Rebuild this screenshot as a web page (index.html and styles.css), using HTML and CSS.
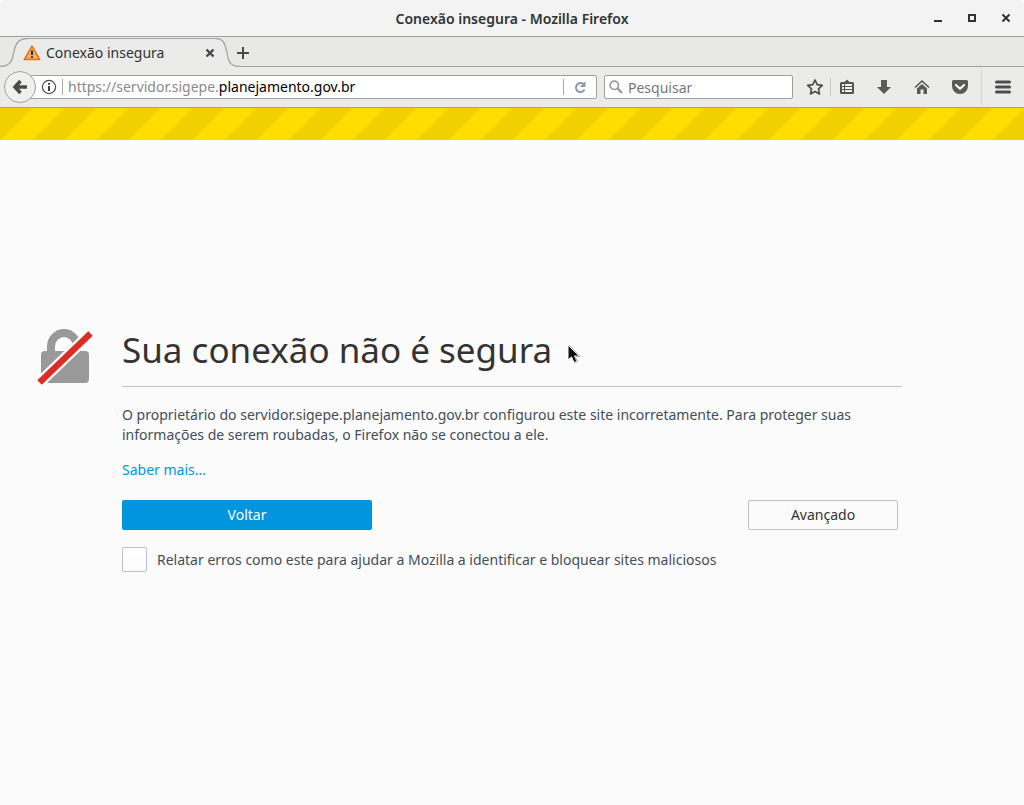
FILE: index.html
```html
<!DOCTYPE html>
<html lang="pt-BR">
<head>
<meta charset="utf-8">
<meta name="viewport" content="width=device-width, initial-scale=1">
<title>Conexão insegura</title>
<link rel="stylesheet" href="styles.css">
</head>
<body>
<div class="window">
  <header class="titlebar">
    <span class="window-title">Conexão insegura - Mozilla Firefox</span>
    <div class="window-controls">
      <button class="window-button" aria-label="Minimizar"><svg width="10" height="10"><path d="M1 8h8" stroke="#2e3436" stroke-width="2"/></svg></button>
      <button class="window-button" aria-label="Maximizar"><svg width="10" height="10"><path d="M2 2h6v6h-6z" fill="none" stroke="#2e3436" stroke-width="2"/></svg></button>
      <button class="window-button" aria-label="Fechar"><svg width="10" height="10"><path d="M1.500 1.500l7 7M8.500 1.500l-7 7" stroke="#2e3436" stroke-width="2"/></svg></button>
    </div>
  </header>
  <nav class="tabs">
    <div class="tab">
      <svg class="tab-edge" width="28" height="29" viewBox="0 0 28 29"><path d="M0 28.500C9 28.500 12 24 13.500 16C15 6 18 .5 28 .5V29H0z" fill="#ebebea"/><path d="M0 28.500C9 28.500 12 24 13.500 16C15 6 18 .5 28 .5" fill="none" stroke="#a3a8ad" stroke-width="1.400"/></svg>
      <div class="tab-body">
        <svg class="tab-icon" width="18" height="16" viewBox="0 0 18 16"><path d="M9 1.200 1.200 14.600h15.600z" fill="#f58c3c" stroke="#e0731c" stroke-width="1.500" stroke-linejoin="round"/><path d="M9 3 3 13.500h12z" fill="#fbb067"/><path d="M9 5.500v4.500M9 11.300v1.700" stroke="#333" stroke-width="2"/></svg>
        <span class="tab-label">Conexão insegura</span>
        <button class="tab-close" aria-label="Fechar aba"><svg width="10" height="10"><path d="M1.500 1.500l7 7M8.500 1.500l-7 7" stroke="#45494b" stroke-width="2.400"/></svg></button>
      </div>
      <svg class="tab-edge" width="24" height="29" viewBox="0 0 24 29"><path d="M0 .5C7 .5 9 5 11 15C12.500 24 14 28.500 24 28.500V29H0z" fill="#ebebea"/><path d="M0 .5C7 .5 9 5 11 15C12.500 24 14 28.500 24 28.500" fill="none" stroke="#a3a8ad" stroke-width="1.400"/></svg>
    </div>
    <button class="new-tab" aria-label="Nova aba"><svg width="12" height="12"><path d="M6 0v12M0 6h12" stroke="#4a4a4a" stroke-width="2"/></svg></button>
  </nav>
  <div class="toolbar">
    <button class="back" aria-label="Voltar uma página"><svg width="16" height="16" viewBox="0 0 16 16"><path d="M8.500 2 3 8l5.500 6M3.500 8H15" fill="none" stroke="#4b4b4b" stroke-width="3.600" stroke-linejoin="miter"/></svg></button>
    <div class="address">
      <button class="info" aria-label="Informações do site"><svg width="16" height="16" viewBox="0 0 16 16"><circle cx="8" cy="8" r="6.600" fill="none" stroke="#4b4b4b" stroke-width="1.200"/><path d="M8 7v5M8 4v1.800" stroke="#3b3b3b" stroke-width="2"/></svg></button>
      <div class="url" role="textbox" aria-label="Endereço" tabindex="0">https://servidor.sigepe.<span class="url-domain">planejamento.gov.br</span></div>
      <button class="reload" aria-label="Recarregar"><svg width="14" height="14" viewBox="0 0 14 14"><path d="M10.500 4.200A4.500 4.500 0 1 0 11.500 9.500" fill="none" stroke="#8c9aab" stroke-width="2"/><path d="M12.500 1v6H6.800z" fill="#8c9aab"/></svg></button>
    </div>
    <label class="search">
      <svg width="14" height="14" viewBox="0 0 14 14"><circle cx="5.300" cy="5.300" r="4.200" fill="none" stroke="#999" stroke-width="1.700"/><path d="M8.500 8.500l4.500 4.500" stroke="#999" stroke-width="2.400"/></svg>
      <input class="search-input" type="text" placeholder="Pesquisar" aria-label="Pesquisar">
    </label>
    <div class="actions">
      <button class="action star" aria-label="Favoritar"><svg width="18" height="18" viewBox="0 0 18 18"><path d="M9 2l2.200 4.700 5.100.6-3.800 3.500 1 5.100L9 13.400l-4.500 2.500 1-5.100L1.700 7.300l5.100-.6z" fill="none" stroke="#4d4d4d" stroke-width="1.700" stroke-linejoin="round"/></svg></button>
      <button class="action list" aria-label="Lista de favoritos"><svg width="16" height="16" viewBox="0 0 16 16"><path d="M2.500 3h3L8 .5 10.500 3h3Q15 3 15 4.500v9q0 1.500-1.500 1.500h-11Q1 15 1 13.500v-9Q1 3 2.500 3z" fill="#555"/><path d="M3 6h2M6 6h7M3 9h2M6 9h7M3 12h2M6 12h7" stroke="#f3f3f3" stroke-width="2"/></svg></button>
      <button class="action" aria-label="Downloads"><svg width="16" height="16" viewBox="0 0 16 16"><path d="M5 1h6v7h4L8 15 1 8h4z" fill="#5a5a5a"/></svg></button>
      <button class="action" aria-label="Página inicial"><svg width="16" height="16" viewBox="0 0 16 16"><path d="M1 8.500 8 2l7 6.500" fill="none" stroke="#555" stroke-width="1.600"/><path d="M3 9.500 8 5l5 4.500V15H9.500v-4.500h-3V15H3z" fill="#5a5a5a"/></svg></button>
      <button class="action" aria-label="Pocket"><svg width="16" height="16" viewBox="0 0 16 16"><path d="M1.500 1h13Q16 1 16 2.500V7q0 3.500-2.300 5.700Q11.300 15 8 15T2.300 12.700Q0 10.500 0 7V2.500Q0 1 1.500 1z" fill="#5a5a5a"/><path d="M4 6l4 3.800L12 6" fill="none" stroke="#fff" stroke-width="2.200" stroke-linecap="round" stroke-linejoin="round"/></svg></button>
    </div>
    <button class="menu" aria-label="Abrir menu"><svg width="16" height="14" viewBox="0 0 16 14"><path d="M1.500 2h13M1.500 7h13M1.500 12h13" stroke="#4d4d4d" stroke-width="3" stroke-linecap="round"/></svg></button>
  </div>
  <main class="page">
    <svg class="lock" width="58" height="58" viewBox="0 0 58 58"><path d="M15 25V17.500a13 13.500 0 0 1 26 0V25" fill="none" stroke="#999" stroke-width="8"/><rect x="5" y="22" width="48" height="32" rx="4" fill="#999"/><path d="M2.500 54.500 55 4" stroke="#fbfbfb" stroke-width="11"/><path d="M3.500 53.500 54.500 4.500" stroke="#dc2d22" stroke-width="6.500"/></svg>
    <div class="content">
      <h1 class="title">Sua conexão não é segura</h1>
      <p class="text">O proprietário do servidor.sigepe.planejamento.gov.br configurou este site incorretamente. Para proteger suas informações de serem roubadas, o Firefox não se conectou a ele.</p>
      <p class="text"><a class="link" href="#">Saber mais…</a></p>
      <div class="buttons">
        <button class="button primary">Voltar</button>
        <button class="button secondary">Avançado</button>
      </div>
      <label class="report"><input class="checkbox" type="checkbox"><span>Relatar erros como este para ajudar a Mozilla a identificar e bloquear sites maliciosos</span></label>
    </div>
    <svg class="cursor" width="14" height="20" viewBox="0 0 14 20"><path d="M1 1v15l3.500-3 2.500 5.500 3-1.300-2.500-5.200H12z" fill="#111" stroke="#fff"/><path d="M8 12.500l2.500 5-3.500 1.500M9 12.500h4L2 1" fill="none" stroke="#aaa"/></svg>
  </main>
</div>
</body>
</html>
```
FILE: styles.css
```css
* {
  box-sizing: border-box;
}

body {
  margin: 0;
  background: #fff;
  font-family: "Noto Sans", "Open Sans", sans-serif;
  font-size: 14px;
  color: #2e3436;
}

button {
  padding: 0;
  border: 0;
  background: none;
  font: inherit;
  color: inherit;
}

svg {
  display: block;
  flex: none;
}

.window {
  display: flex;
  flex-direction: column;
  min-height: 100vh;
  border-radius: 6px 6px 0 0;
  overflow: hidden;
  background: #e8e8e7;
}

.titlebar {
  display: grid;
  grid-template-columns: 1fr auto 1fr;
  align-items: center;
  height: 37px;
  border-bottom: 1px solid #a1a19c;
  background: #f3f3f3;
}

.window-title {
  grid-column: 2;
  font-weight: 600;
}

.window-controls {
  display: flex;
  justify-content: flex-end;
  gap: 4px;
  padding-right: 3px;
}

.window-button {
  display: grid;
  place-items: center;
  width: 30px;
  height: 30px;
}

.tabs {
  display: flex;
  align-items: flex-end;
  height: 30px;
  background: linear-gradient(#a1a19c, #a1a19c) bottom / 100% 1px no-repeat #e8e8e7;
}

.tab {
  display: flex;
  height: 29px;
}

.tab-body {
  display: flex;
  align-items: center;
  width: 188px;
  border-top: 1px solid #a3a8ad;
  background: #ebebea;
}

.tab-icon {
  margin: 0 5px 0 -5px;
}

.tab-label {
  flex: 1;
  padding-bottom: 2px;
}

.tab-close {
  display: grid;
  place-items: center;
  width: 12px;
  height: 20px;
}

.new-tab {
  display: grid;
  place-items: center;
  width: 20px;
  height: 28px;
  margin-left: -7px;
}

.toolbar {
  display: flex;
  align-items: center;
  height: 41px;
  padding-left: 4px;
  border-bottom: 1px solid #a1a19c;
  background: #ebebea;
}

.back {
  display: grid;
  place-items: center;
  z-index: 1;
  width: 32px;
  height: 32px;
  border: 1px solid #a1a19c;
  border-radius: 50%;
  background: #f0f0ef;
}

.address,
.search {
  display: flex;
  align-items: center;
  height: 24px;
  border: 1px solid #a1a19c;
  border-radius: 2px;
  background: #fff;
}

.address {
  flex: 1;
  min-width: 0;
  margin-left: -6px;
  padding-left: 10px;
}

.info {
  padding-right: 5px;
}

.url {
  flex: 1;
  min-width: 0;
  height: 16px;
  padding-left: 5px;
  border-left: 1px solid #aaa;
  border-right: 1px solid #aaa;
  line-height: 16px;
  white-space: nowrap;
  color: #8a8a8a;
}

.url-domain {
  color: #000;
}

.reload {
  padding: 0 9px;
}

.search {
  width: 189px;
  margin-left: 7px;
  padding-left: 4px;
}

.search-input {
  flex: 1;
  min-width: 0;
  height: 20px;
  padding: 0 0 0 5px;
  border: 0;
  outline: 0;
  background: none;
  font: inherit;
}

.search-input::placeholder {
  color: #777;
}

.actions {
  display: flex;
  align-items: center;
  margin: 0 2px 0 6px;
}

.action {
  display: grid;
  place-items: center;
  width: 38px;
  height: 18px;
}

.star {
  width: 31px;
}

.list {
  width: 32px;
  margin-right: 3px;
  border-left: 1px solid #c4c4c2;
}

.menu {
  display: grid;
  place-items: center;
  width: 43px;
  height: 36px;
  border-left: 1px solid #d4d4d2;
}

.page {
  position: relative;
  display: grid;
  flex: 1;
  grid-template-columns: minmax(84px, 1fr) minmax(0, 780px) 1fr;
  align-content: center;
  padding: 32px 0 46px;
  background: linear-gradient(135deg, #f0d000 25%, #fd0 25%, #fd0 50%, #f0d000 50%, #f0d000 75%, #fd0 75%) 0 0 / 64px 64px;
}

.page::before {
  content: "";
  position: absolute;
  inset: 32px 0 0;
  background: #fbfbfb;
}

.lock {
  position: relative;
  justify-self: end;
  margin: 1px 28px 0 0;
}

.content {
  position: relative;
  display: flex;
  flex-direction: column;
  gap: 15px;
  color: #424e5a;
}

.title {
  margin: 0 0 3px;
  padding-bottom: 14px;
  border-bottom: 1px solid #c1c1c1;
  font-size: 35px;
  line-height: 44px;
  font-weight: 400;
  color: #333;
}

.text {
  margin: 0;
  line-height: 20px;
}

.link {
  color: #0095dd;
  text-decoration: none;
}

.buttons {
  display: flex;
  justify-content: space-between;
  padding: 5px 4px 0 0;
}

.button {
  height: 30px;
  border-radius: 2px;
}

.primary {
  width: 250px;
  background: #0095dd;
  color: #fff;
}

.secondary {
  width: 150px;
  border: 1px solid #c1c1c1;
  background: #fbfbfb;
  color: #333;
}

.report {
  display: flex;
  align-items: center;
  gap: 10px;
  margin-top: 2px;
}

.checkbox {
  flex: none;
  appearance: none;
  width: 25px;
  height: 25px;
  margin: 0;
  border: 1px solid #c1c1c1;
  border-radius: 2px;
  background: linear-gradient(#fff, #fbfbfb);
}

.cursor {
  position: absolute;
  top: 236px;
  left: 567px;
}
```
